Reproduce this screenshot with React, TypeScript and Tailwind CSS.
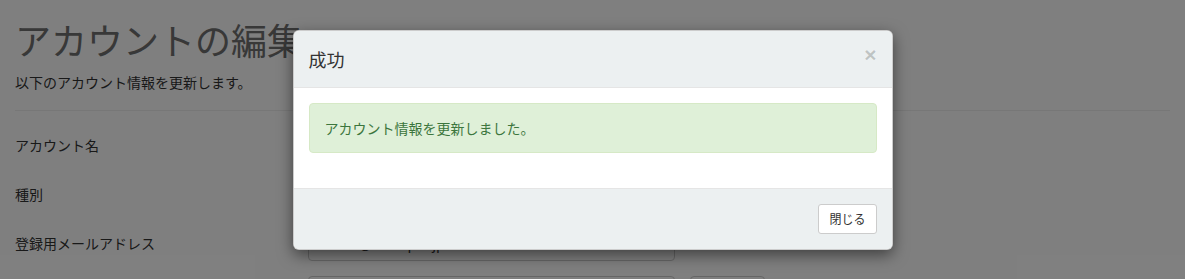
import React from "react";

const font = { fontFamily: '"Noto Sans CJK JP", "Noto Sans", sans-serif' };

function Row({ label, children }: { label: string; children?: React.ReactNode }) {
  return (
    <div className="flex items-center h-[34px] mb-[15px]">
      <div className="w-[293px] text-[14px] text-[#333]">{label}</div>
      {children}
    </div>
  );
}

export default function App() {
  return (
    <div className="relative w-[1185px] h-[279px] overflow-hidden bg-white" style={font}>
      <div className="px-[15px]">
        <h1 className="mt-[20px] mb-[10px] text-[36px] leading-[1.1] text-[#707070] font-normal">アカウントの編集</h1>
        <p className="mb-[10px] text-[14px] leading-[22px] text-[#333] pt-[1px]">以下のアカウント情報を更新します。</p>
        <hr className="mt-[17px] mb-[18px] border-t border-[#eee] w-[1155px]" />
        <Row label="アカウント名">
          <div className="w-[367px] h-[34px] border border-[#ccc] rounded-[4px]" />
        </Row>
        <Row label="種別">
          <div className="w-[367px] h-[34px] border border-[#ccc] rounded-[4px]" />
        </Row>
        <Row label="登録用メールアドレス">
          <div className="w-[367px] h-[34px] border border-[#ccc] rounded-[4px] flex items-center px-[12px] text-[14px] text-[#333]">
            demo@example.jp
          </div>
        </Row>
        <div className="flex items-start h-[34px]">
          <div className="w-[293px]" />
          <div className="w-[367px] h-[34px] border border-[#ccc] rounded-[4px]" />
          <div className="ml-[15px] w-[75px] h-[34px] border border-[#ccc] rounded-[4px]" />
        </div>
      </div>

      <div className="absolute inset-0 bg-black/50" />

      <div className="absolute inset-0 flex justify-center">
        <div className="mt-[30px] w-[600px] h-[220px] bg-white border border-black/20 rounded-[6px] shadow-[0_5px_15px_rgba(0,0,0,0.5)] overflow-hidden flex flex-col">
          <div className="bg-[#ecf0f1] border-b border-[#e5e5e5] h-[57px] px-[15px] flex items-center justify-between">
            <h4 className="text-[18px] text-[#333] leading-[26px]">成功</h4>
            <span
              className="text-[21px] font-bold leading-none text-black/20 mt-[-9px]"
              style={{ fontFamily: '"Liberation Sans", Arial, sans-serif' }}
            >
              ×
            </span>
          </div>
          <div className="bg-white px-[15px] pt-[15px] pb-[35px]">
            <div className="h-[50px] bg-[#dff0d8] border border-[#d6e9c6] rounded-[4px] px-[15px] flex items-center text-[14px] text-[#3c763d]">
              アカウント情報を更新しました。
            </div>
          </div>
          <div className="flex-1 bg-[#ecf0f1] border-t border-[#e5e5e5] px-[15px] flex items-center justify-end">
            <button className="h-[30px] px-[10px] text-[12px] text-[#333] bg-white border border-[#ccc] rounded-[3px] leading-[1.5]">
              閉じる
            </button>
          </div>
        </div>
      </div>
    </div>
  );
}
